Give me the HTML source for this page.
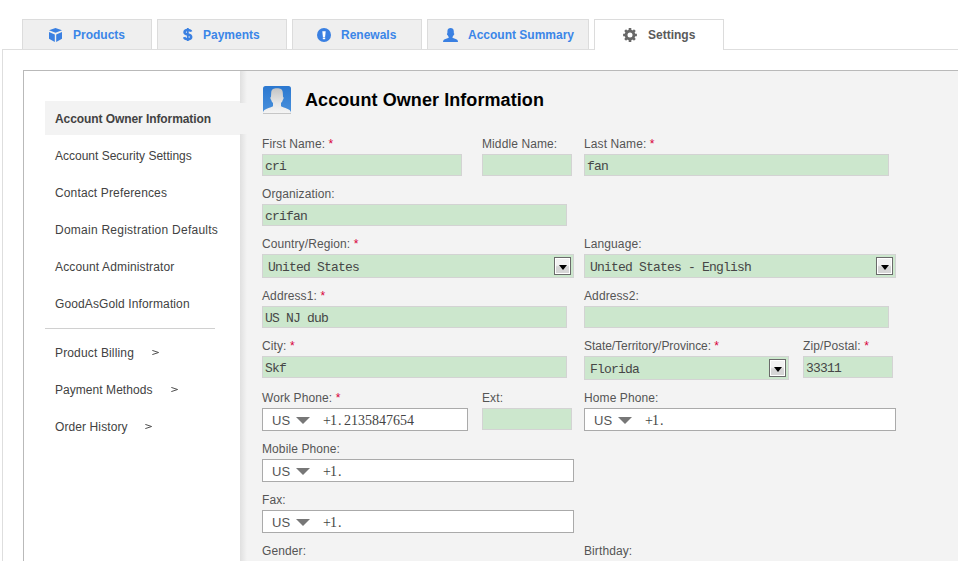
<!DOCTYPE html>
<html><head><meta charset="utf-8"><style>
*{margin:0;padding:0;box-sizing:border-box}
html,body{width:958px;height:561px;overflow:hidden;background:#fff;font-family:"Liberation Sans",sans-serif;}
.a{position:absolute}
svg{position:absolute;display:block}
.tab{position:absolute;top:19px;height:30px;border:1px solid #dcdcdc;border-bottom:none;background:#efefef;color:#3b86e8;font-weight:bold;font-size:12px;}
.tab .t{position:absolute;top:8px;white-space:nowrap;line-height:14px}
.tab.on{background:#fff;color:#5a5a5a;height:31px}
.outer{position:absolute;left:2px;top:49px;width:960px;height:600px;border:1px solid #dedede;background:#fff}
.inner{position:absolute;left:23px;top:70px;width:940px;height:600px;border:1px solid #b9b9b9;background:#fff}
.content{position:absolute;left:240px;top:71px;width:730px;height:600px;background:#f3f3f3}
.shadow{position:absolute;left:240px;top:71px;width:7px;height:600px;background:linear-gradient(to right,#e0e0e0,#f3f3f3)}
.side{position:absolute;left:55px;font-size:12px;line-height:14px;color:#424242;white-space:nowrap}
.gt{position:absolute;font-size:10px;line-height:12px;color:#555}
.lbl{position:absolute;font-size:12px;line-height:14px;color:#555;white-space:nowrap;letter-spacing:0.1px}
.req{color:#d8003a;letter-spacing:0}
.inp{position:absolute;border:1px solid #d3d3d3;background:#cce7cd}
.val{position:absolute;font-family:"Liberation Mono",monospace;font-size:13px;letter-spacing:-0.8px;line-height:15px;color:#464646;white-space:nowrap}
.sel{position:absolute;border:1px solid #d3d3d3;background:#cce7cd}
.btn{position:absolute;width:17px;height:18px;border:1px solid #6a6a6a;background:linear-gradient(#f2f2f2 45%,#d6d6d6 55%);box-shadow:inset 0 0 0 1px #fff}
.btn:after{content:"";position:absolute;left:3.5px;top:6.5px;border-left:4px solid transparent;border-right:4px solid transparent;border-top:5px solid #000}
.ph{position:absolute;border:1px solid #aaa;background:#fff}
.ph .us{position:absolute;left:9px;top:4px;font-size:13px;line-height:15px;color:#555}
.ph .tri{position:absolute;left:33px;top:8px;border-left:7px solid transparent;border-right:7px solid transparent;border-top:7px solid #777;width:0;height:0}
.ph .num{position:absolute;left:60px;top:4px;font-family:"Liberation Serif",serif;font-size:14px;line-height:16px;color:#444;white-space:nowrap}
.ph .num i{font-style:normal;display:inline-block;width:7px;text-align:center}
</style></head><body>
<div class="outer"></div>
<div class="tab" style="left:22px;width:130px"><span class="t" style="left:50px">Products</span></div><svg style="left:49px;top:28px" width="13" height="14" viewBox="0 0 13 14"><path fill="#3a80e2" d="M0,2.3 L6.5,0 L13,2.3 L6.5,4.7Z M0,4 L5.8,6.5 L5.8,14 L0,10.8Z M7.2,6.5 L13,4 L13,10.8 L7.2,14Z"/></svg>
<div class="tab" style="left:157px;width:130px"><span class="t" style="left:45px">Payments</span></div>
<svg style="left:183px;top:28px" width="10" height="13" viewBox="0 0 10 13"><path fill="none" stroke="#3a80e2" stroke-width="2.5" d="M8.2,3.6 C7.8,2.4 6.5,1.9 4.7,1.9 C2.8,1.9 1.5,2.7 1.5,4.2 C1.5,5.8 3.2,6.2 4.8,6.5 C6.8,6.9 8.2,7.4 8.2,9 C8.2,10.5 6.7,11.2 4.8,11.2 C2.9,11.2 1.5,10.6 1.1,9.1"/><rect x="3.9" y="0" width="1.8" height="13" fill="#3a80e2"/></svg>
<div class="tab" style="left:292px;width:130px"><span class="t" style="left:48px">Renewals</span></div><svg style="left:317px;top:28px" width="14" height="14" viewBox="0 0 14 14"><circle cx="7" cy="7" r="7" fill="#3a80e2"/><path fill="#fff" d="M5.3,3.2 L8.7,3.2 L8.1,9 L5.9,9Z"/><rect x="5.8" y="9.5" width="2.4" height="1.7" fill="#fff"/></svg>
<div class="tab" style="left:427px;width:162px"><span class="t" style="left:40px">Account Summary</span></div><svg style="left:443px;top:28px" width="15" height="14" viewBox="0 0 15 14"><path fill="#3a80e2" d="M4.4,3.2 C4.4,0.9 5.8,0 7.6,0 C9.4,0 10.8,0.9 10.8,3.2 L10.8,5.2 C11.5,5.2 11.4,6.9 10.7,7.1 C10.4,7.9 9.9,8.5 9.5,8.9 L9.5,9.7 C11,10.4 13.2,10.8 14.2,11.7 C14.8,12.3 15,13.2 15,14 L0,14 C0,13.2 0.3,12.3 0.9,11.7 C1.9,10.8 4.2,10.4 5.7,9.7 L5.7,8.9 C5.3,8.5 4.8,7.9 4.5,7.1 C3.8,6.9 3.7,5.2 4.4,5.2Z"/></svg>
<div class="tab on" style="left:594px;width:130px"><span class="t" style="left:53px">Settings</span></div><svg style="left:623px;top:28px" width="14" height="14" viewBox="0 0 14 14"><path fill="#686868" fill-rule="evenodd" d="M11.99,4.93 L12.25,5.74 L13.88,5.69 L13.88,8.31 L12.25,8.26 L11.99,9.07 L11.60,9.82 L12.79,10.93 L10.93,12.79 L9.82,11.60 L9.07,11.99 L8.26,12.25 L8.31,13.88 L5.69,13.88 L5.74,12.25 L4.93,11.99 L4.18,11.60 L3.07,12.79 L1.21,10.93 L2.40,9.82 L2.01,9.07 L1.75,8.26 L0.12,8.31 L0.12,5.69 L1.75,5.74 L2.01,4.93 L2.40,4.18 L1.21,3.07 L3.07,1.21 L4.18,2.40 L4.93,2.01 L5.74,1.75 L5.69,0.12 L8.31,0.12 L8.26,1.75 L9.07,2.01 L9.82,2.40 L10.93,1.21 L12.79,3.07 L11.60,4.18Z M9.5,7 A2.5,2.5 0 1,0 4.5,7 A2.5,2.5 0 1,0 9.5,7Z"/></svg>
<div class="inner"></div><div class="content"></div><div class="shadow"></div>
<div class="a" style="left:240px;top:103px;width:16px;height:31px;background:#f3f3f3"></div>
<div class="a" style="left:45px;top:101px;width:195px;height:34px;background:#f3f3f3"></div>
<div class="side" style="top:112px;font-weight:bold;letter-spacing:-0.08px">Account Owner Information</div>
<div class="side" style="top:149px;">Account Security Settings</div>
<div class="side" style="top:186px;letter-spacing:0.14px">Contact Preferences</div>
<div class="side" style="top:223px;letter-spacing:0.25px">Domain Registration Defaults</div>
<div class="side" style="top:260px;letter-spacing:0.13px">Account Administrator</div>
<div class="side" style="top:297px;letter-spacing:0.12px">GoodAsGold Information</div>
<div class="side" style="top:346px;letter-spacing:0.15px">Product Billing</div>
<div class="side" style="top:383px;letter-spacing:0.05px">Payment Methods</div>
<div class="side" style="top:420px;letter-spacing:0.1px">Order History</div>
<div class="a" style="left:45px;top:328px;width:170px;height:1px;background:#d0d0d0"></div>
<svg style="left:152px;top:350px" width="7" height="5" viewBox="0 0 7 5"><path d="M0.3,0.4 L6.6,2.5 L0.3,4.6" fill="none" stroke="#505050" stroke-width="1"/></svg>
<svg style="left:171px;top:387px" width="7" height="5" viewBox="0 0 7 5"><path d="M0.3,0.4 L6.6,2.5 L0.3,4.6" fill="none" stroke="#505050" stroke-width="1"/></svg>
<svg style="left:145px;top:424px" width="7" height="5" viewBox="0 0 7 5"><path d="M0.3,0.4 L6.6,2.5 L0.3,4.6" fill="none" stroke="#505050" stroke-width="1"/></svg>
<svg style="left:263px;top:86px" width="28" height="28" viewBox="0 0 28 28">
<defs><linearGradient id="bl" x1="0" y1="0" x2="0" y2="1"><stop offset="0" stop-color="#2b78d0"/><stop offset="1" stop-color="#4a91dc"/></linearGradient>
<linearGradient id="gr" x1="0" y1="0" x2="0" y2="1"><stop offset="0" stop-color="#c4c4c4"/><stop offset="0.6" stop-color="#e6e6e6"/><stop offset="1" stop-color="#f4f4f4"/></linearGradient></defs>
<rect x="0" y="0" width="28" height="28" rx="2.5" fill="url(#bl)"/>
<path fill="url(#gr)" d="M8.2,6.8 C8.2,3.3 10.5,2.2 14,2.2 C17.5,2.2 19.8,3.3 19.8,6.8 L20,10.8 C20.9,10.8 20.8,13.3 19.9,13.7 C19.5,15.1 18.9,16.3 18,17.1 L18,20.2 C20.5,21.5 24.5,22.6 26.6,24.1 C27.6,24.9 28,26 28,27 L0,27 C0,26 0.4,24.9 1.4,24.1 C3.5,22.6 7.5,21.5 10,20.2 L10,17.1 C9.1,16.3 8.5,15.1 8.1,13.7 C7.2,13.3 7.1,10.8 8,10.8 Z"/>
<rect x="0" y="27" width="28" height="1" fill="#c6c6c6"/>
</svg>
<div class="a" style="left:305px;top:90px;font-size:18px;line-height:20px;font-weight:bold;color:#000;white-space:nowrap;letter-spacing:0.08px">Account Owner Information</div>
<div class="lbl" style="left:262px;top:137px">First Name: <span class="req">*</span></div>
<div class="lbl" style="left:482px;top:137px">Middle Name:</div>
<div class="lbl" style="left:584px;top:137px">Last Name: <span class="req">*</span></div>
<div class="inp" style="left:262px;top:154px;width:200px;height:22px"></div>
<div class="val" style="left:265px;top:159px">cri</div>
<div class="inp" style="left:482px;top:154px;width:90px;height:22px"></div>
<div class="inp" style="left:584px;top:154px;width:305px;height:22px"></div>
<div class="val" style="left:587px;top:159px">fan</div>
<div class="lbl" style="left:262px;top:187px">Organization:</div>
<div class="inp" style="left:262px;top:204px;width:305px;height:22px"></div>
<div class="val" style="left:265px;top:209px">crifan</div>
<div class="lbl" style="left:262px;top:237px">Country/Region: <span class="req">*</span></div>
<div class="lbl" style="left:584px;top:237px">Language:</div>
<div class="sel" style="left:262px;top:254px;width:312px;height:24px"></div>
<div class="val" style="left:268px;top:260px">United States</div>
<div class="btn" style="left:554px;top:257px"></div>
<div class="sel" style="left:584px;top:254px;width:312px;height:24px"></div>
<div class="val" style="left:590px;top:260px">United States - English</div>
<div class="btn" style="left:876px;top:257px"></div>
<div class="lbl" style="left:262px;top:289px">Address1: <span class="req">*</span></div>
<div class="lbl" style="left:584px;top:289px">Address2:</div>
<div class="inp" style="left:262px;top:306px;width:305px;height:22px"></div>
<div class="val" style="left:265px;top:311px">US NJ dub</div>
<div class="inp" style="left:584px;top:306px;width:305px;height:22px"></div>
<div class="lbl" style="left:262px;top:339px">City: <span class="req">*</span></div>
<div class="lbl" style="left:584px;top:339px;letter-spacing:-0.04px">State/Territory/Province: <span class="req">*</span></div>
<div class="lbl" style="left:803px;top:339px">Zip/Postal: <span class="req">*</span></div>
<div class="inp" style="left:262px;top:356px;width:305px;height:22px"></div>
<div class="val" style="left:265px;top:361px">Skf</div>
<div class="sel" style="left:584px;top:356px;width:205px;height:24px"></div>
<div class="val" style="left:590px;top:362px">Florida</div>
<div class="btn" style="left:769px;top:359px"></div>
<div class="inp" style="left:803px;top:356px;width:90px;height:22px"></div>
<div class="val" style="left:806px;top:361px">33311</div>
<div class="lbl" style="left:262px;top:391px">Work Phone: <span class="req">*</span></div>
<div class="lbl" style="left:482px;top:391px">Ext:</div>
<div class="lbl" style="left:584px;top:391px">Home Phone:</div>
<div class="ph" style="left:262px;top:408px;width:206px;height:23px"><span class="us">US</span><span class="tri"></span><span class="num"><i>+</i><i>1</i><i style="text-align:left;padding-left:1px">.</i><i>2</i><i>1</i><i>3</i><i>5</i><i>8</i><i>4</i><i>7</i><i>6</i><i>5</i><i>4</i></span></div>
<div class="inp" style="left:482px;top:408px;width:90px;height:22px"></div>
<div class="ph" style="left:584px;top:408px;width:312px;height:23px"><span class="us">US</span><span class="tri"></span><span class="num"><i>+</i><i>1</i><i style="text-align:left;padding-left:1px">.</i></span></div>
<div class="lbl" style="left:262px;top:442px">Mobile Phone:</div>
<div class="ph" style="left:262px;top:459px;width:312px;height:23px"><span class="us">US</span><span class="tri"></span><span class="num"><i>+</i><i>1</i><i style="text-align:left;padding-left:1px">.</i></span></div>
<div class="lbl" style="left:262px;top:493px">Fax:</div>
<div class="ph" style="left:262px;top:510px;width:312px;height:23px"><span class="us">US</span><span class="tri"></span><span class="num"><i>+</i><i>1</i><i style="text-align:left;padding-left:1px">.</i></span></div>
<div class="lbl" style="left:262px;top:544px">Gender:</div>
<div class="lbl" style="left:584px;top:544px">Birthday:</div>
</body></html>
